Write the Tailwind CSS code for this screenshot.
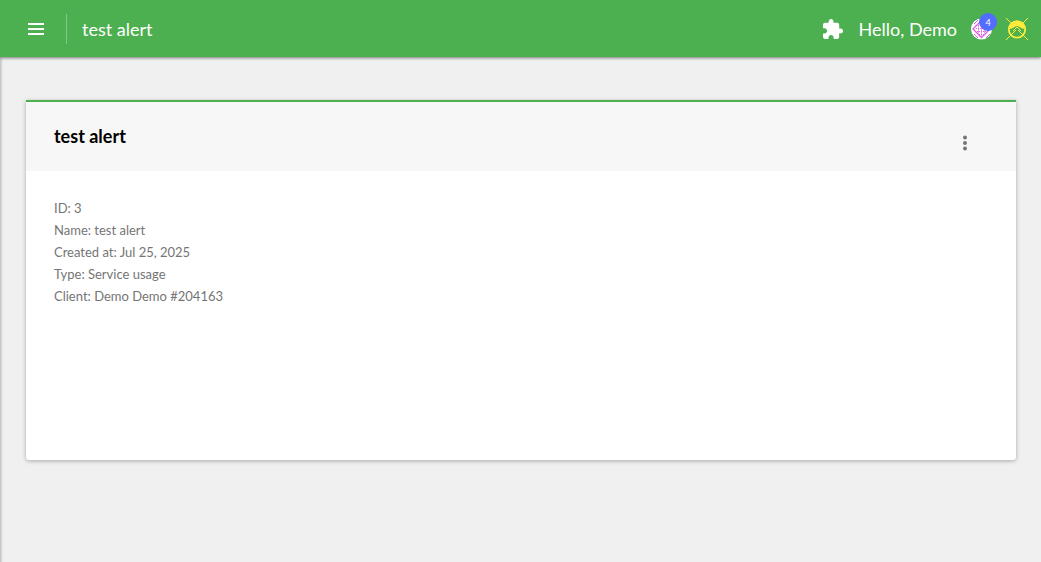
<!DOCTYPE html>
<html lang="en">

<head>
    <meta charset="UTF-8">
    <meta name="viewport" content="width=device-width, initial-scale=1.0">
    <title>test alert</title>
    <script src="https://cdn.jsdelivr.net/npm/@tailwindcss/browser@4"></script>
</head>

<body class="bg-[#f0f0f0] min-h-screen flex flex-col font-['Lato',sans-serif]">
    <!-- Top bar -->
    <header class="relative z-10 flex items-center justify-between h-[57px] pt-px pl-6 pr-3 bg-[#4caf50] text-white shadow-[0_1px_3px_rgba(0,0,0,0.5)]">
        <div class="flex items-center">
            <button type="button" aria-label="Menu" class="block">
                <svg class="size-6" viewBox="0 0 24 24" fill="currentColor">
                    <path d="M4 18h16v-2H4v2zm0-5h16v-2H4v2zm0-7v2h16V6H4z" />
                </svg>
            </button>
            <div class="w-px h-[30px] ml-[18px] mr-[15px] bg-white/30"></div>
            <span class="text-lg leading-6">test alert</span>
        </div>

        <div class="flex items-center">
            <button type="button" aria-label="Plugins" class="block mr-4">
                <svg class="size-5" viewBox="2 1 21 21" fill="currentColor">
                    <path d="M20.5 11H19V7c0-1.1-.9-2-2-2h-4V3.5C13 2.12 11.88 1 10.5 1S8 2.12 8 3.5V5H4c-1.1 0-1.99.9-1.99 2v3.8H3.5c1.49 0 2.7 1.21 2.7 2.7s-1.21 2.7-2.7 2.7H2V20c0 1.1.9 2 2 2h3.8v-1.5c0-1.49 1.21-2.7 2.7-2.7 1.49 0 2.7 1.21 2.7 2.7V22H17c1.1 0 2-.9 2-2v-4h1.5c1.38 0 2.5-1.12 2.5-2.5S21.88 11 20.5 11z" />
                </svg>
            </button>
            <span class="text-lg leading-6">Hello, Demo</span>
            <button type="button" aria-label="Notifications" class="relative block ml-3.5">
                <svg class="size-[22px]" viewBox="0 0 22 22">
                    <circle cx="10.5" cy="11" r="10.5" fill="#fff" />
                    <g fill="none" stroke="#e25be0">
                        <path d="M10.5 2.5 19 11l-8.500 8.500L2 11z" stroke-width="1.3" />
                        <path d="M7 7.5h8M5 10.5h12M6 13.5h10M8 16.5h6" stroke-width="1" stroke-dasharray="1 1" />
                        <path d="M7.5 7v8M10.5 4v14M13.5 7v8" stroke-width=".6" />
                        <path d="M3 16l4 4M19 16l-4 4M3 6l4-4" stroke-width="1" />
                    </g>
                </svg>
                <span class="absolute -top-[5px] left-2 flex items-center justify-center size-[18px] rounded-full bg-[#536dfe] text-[9px] leading-none">4</span>
            </button>
            <button type="button" aria-label="Account" class="block ml-3">
                <svg class="size-6" viewBox="0 0 24 24" fill="none" stroke="#ffeb3b">
                    <path d="M1 1l8 8M23 1l-8 8M1 23l10-10M23 23 13 13" stroke-width="1" />
                    <path d="M3.5 12a8.5 8.5 0 0 1 17 0L17 11.500 14.500 10 12 9 9.500 10 7 11.500z" fill="#ffeb3b" stroke="none" />
                    <circle cx="12" cy="12.5" r="8.2" stroke-width="1.8" />
                    <path d="M8 14l4-4 4 4" stroke-width="1" />
                </svg>
            </button>
        </div>
    </header>

    <div class="flex-1 flex">
        <!-- Edge of the collapsed sidebar -->
        <div class="w-[3px] bg-linear-to-r from-black/20 to-transparent"></div>

        <main class="flex-1 pt-[43px] pl-[23px] pr-[25px] pb-10">
            <section class="min-h-[360px] bg-white rounded-b-[3px] border-t-2 border-[#4caf50] shadow-[0_1px_4px_rgba(0,0,0,0.3)]">
                <div class="flex items-start justify-between h-[69px] pt-[22px] pl-7 pr-[39px] bg-[#f7f7f7]">
                    <h1 class="text-lg leading-6 font-bold text-black">test alert</h1>
                    <button type="button" aria-label="More actions" class="block pt-[7px] text-[#757575]">
                        <svg class="size-6" viewBox="0 0 24 24" fill="currentColor">
                            <circle cx="12" cy="6.5" r="2" />
                            <circle cx="12" cy="12" r="2" />
                            <circle cx="12" cy="17.5" r="2" />
                        </svg>
                    </button>
                </div>
                <div class="px-7 pt-[26px] pb-7 text-[13px] leading-[22px] text-[#757575]">
                    <p>ID: 3</p>
                    <p>Name: test alert</p>
                    <p>Created at: Jul 25, 2025</p>
                    <p>Type: Service usage</p>
                    <p>Client: Demo Demo #204163</p>
                </div>
            </section>
        </main>
    </div>
</body>

</html>
